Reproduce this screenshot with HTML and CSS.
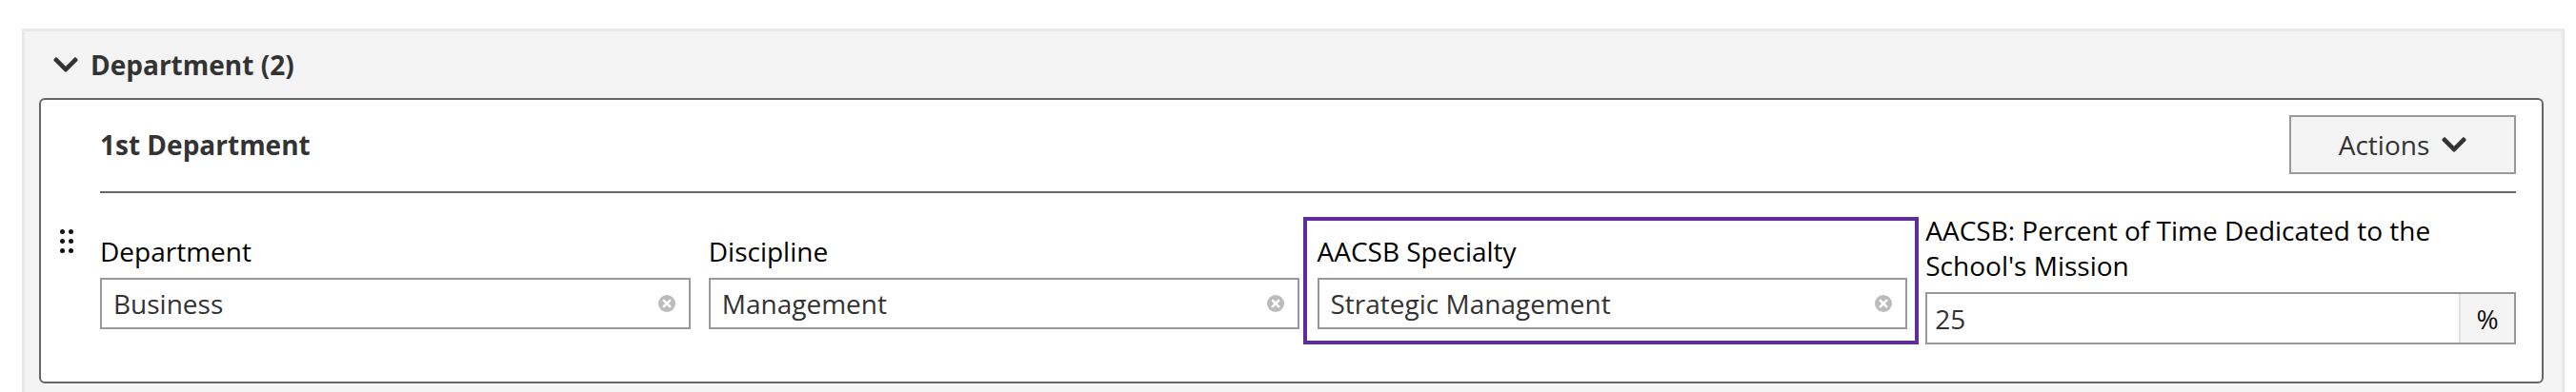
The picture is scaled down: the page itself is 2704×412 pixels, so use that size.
FILE: index.html
```html
<!DOCTYPE html>
<html lang="en">
<head>
    <meta charset="UTF-8">
    <meta name="viewport" content="width=device-width, initial-scale=1.0">
    <title>Department</title>
    <link rel="stylesheet" href="styles.css">
</head>
<body>
    <div class="panel">
        <div class="panel-head">
            <svg class="chevron" viewBox="0 120 448 270" width="26" height="16"><path d="M207.029 381.476L12.686 187.132c-9.373-9.373-9.373-24.569 0-33.941l22.667-22.667c9.357-9.357 24.522-9.375 33.901-.04L224 284.505l154.745-154.021c9.379-9.335 24.544-9.317 33.901.04l22.667 22.667c9.373 9.373 9.373 24.569 0 33.941L240.971 381.476c-9.373 9.372-24.569 9.372-33.942 0z"/></svg>
            <span>Department (2)</span>
        </div>

        <div class="item-card">
            <div class="card-head">
                <h3>1st Department</h3>
                <button class="actions">
                    Actions
                    <svg class="chevron" viewBox="0 120 448 270" width="26" height="16"><path d="M207.029 381.476L12.686 187.132c-9.373-9.373-9.373-24.569 0-33.941l22.667-22.667c9.357-9.357 24.522-9.375 33.901-.04L224 284.505l154.745-154.021c9.379-9.335 24.544-9.317 33.901.04l22.667 22.667c9.373 9.373 9.373 24.569 0 33.941L240.971 381.476c-9.373 9.372-24.569 9.372-33.942 0z"/></svg>
                </button>
            </div>

            <div class="drag-handle">
                <span></span><span></span>
                <span></span><span></span>
                <span></span><span></span>
            </div>

            <div class="field-row">
                <div class="field">
                    <label>Department</label>
                    <div class="select-box">
                        <span>Business</span>
                        <svg class="clear" viewBox="0 0 18 18" width="18" height="18"><circle cx="9" cy="9" r="9"/><path d="M5.8 5.8l6.4 6.4M12.2 5.8l-6.4 6.4"/></svg>
                    </div>
                </div>
                <div class="field">
                    <label>Discipline</label>
                    <div class="select-box">
                        <span>Management</span>
                        <svg class="clear" viewBox="0 0 18 18" width="18" height="18"><circle cx="9" cy="9" r="9"/><path d="M5.8 5.8l6.4 6.4M12.2 5.8l-6.4 6.4"/></svg>
                    </div>
                </div>
                <div class="field highlighted">
                    <label>AACSB Specialty</label>
                    <div class="select-box">
                        <span>Strategic Management</span>
                        <svg class="clear" viewBox="0 0 18 18" width="18" height="18"><circle cx="9" cy="9" r="9"/><path d="M5.8 5.8l6.4 6.4M12.2 5.8l-6.4 6.4"/></svg>
                    </div>
                </div>
                <div class="field two-line">
                    <label>AACSB: Percent of Time Dedicated to the School's Mission</label>
                    <div class="input-group">
                        <span class="value">25</span>
                        <span class="addon">%</span>
                    </div>
                </div>
            </div>
        </div>
    </div>
</body>
</html>
```

FILE: styles.css
```css
body {
    margin: 0;
    background-color: #fff;
    font-family: "Open Sans", "Noto Sans", sans-serif;
    font-size: 28px;
    color: #333;
    overflow: hidden;
}
.panel {
    margin: 30px 12px 0 23px;
    height: 400px;
    border: 3px solid #e8e8e8;
    border-bottom: none;
    background-color: #f4f4f4;
    padding: 0 19px 0 15px;
}
.panel-head {
    display: flex;
    align-items: center;
    gap: 13px;
    height: 70px;
    padding: 0 0 0 15px;
    box-sizing: border-box;
    font-weight: bold;
    line-height: 38px;
    color: #333;
}
.chevron {
    fill: #333;
    flex-shrink: 0;
}
.item-card {
    display: grid;
    grid-template-columns: 62px 1fr;
    padding: 0 27px 39px 0;
    background-color: #fff;
    border: 2px solid #666;
    border-radius: 6px;
}
.card-head {
    grid-column: 2;
    display: flex;
    justify-content: space-between;
    align-items: center;
    padding: 16px 0 18px;
    border-bottom: 2px solid #666;
}
.card-head h3 {
    margin: 0;
    font-size: 28px;
    font-weight: bold;
    color: #333;
}
.actions {
    display: flex;
    align-items: center;
    justify-content: center;
    gap: 13px;
    width: 238px;
    height: 62px;
    border: 2px solid #999;
    background-color: #f4f4f4;
    font-family: inherit;
    font-size: 28px;
    color: #333;
}
.drag-handle {
    grid-column: 1;
    grid-row: 2;
    align-self: start;
    display: grid;
    grid-template-columns: 5px 5px;
    column-gap: 4px;
    row-gap: 5px;
    margin: 38px 0 0 20px;
}
.drag-handle span {
    width: 5px;
    height: 5px;
    border-radius: 50%;
    background-color: #111;
}
.field-row {
    grid-column: 2;
    grid-row: 2;
    display: grid;
    grid-template-columns: repeat(4, 1fr);
    column-gap: 19px;
    align-items: start;
    padding-top: 21px;
}
.field {
    margin-top: 22px;
}
.field.two-line {
    margin-top: 0;
}
.field label {
    display: block;
    line-height: 37px;
    margin-bottom: 9px;
    color: #000;
}
.select-box,
.input-group {
    display: flex;
    align-items: center;
    height: 54px;
    box-sizing: border-box;
    border: 2px solid #999;
    background-color: #fff;
    color: #333;
}
.select-box span {
    flex: 1;
    padding-left: 12px;
}
.clear {
    margin-right: 14px;
}
.clear circle {
    fill: #bbb;
}
.clear path {
    stroke: #fff;
    stroke-width: 2.6;
    stroke-linecap: round;
}
.input-group {
    height: 55px;
}
.input-group .value {
    flex: 1;
    padding-left: 8px;
}
.input-group .addon {
    align-self: stretch;
    display: flex;
    align-items: center;
    justify-content: center;
    width: 56px;
    border-left: 2px solid #e2e2e2;
    background-color: #f4f4f4;
    color: #111;
}
.highlighted {
    position: relative;
}
.highlighted::after {
    content: "";
    position: absolute;
    top: -18px;
    bottom: -16px;
    left: -15px;
    right: -12px;
    border: 4px solid #5e2d9a;
    pointer-events: none;
}
```
